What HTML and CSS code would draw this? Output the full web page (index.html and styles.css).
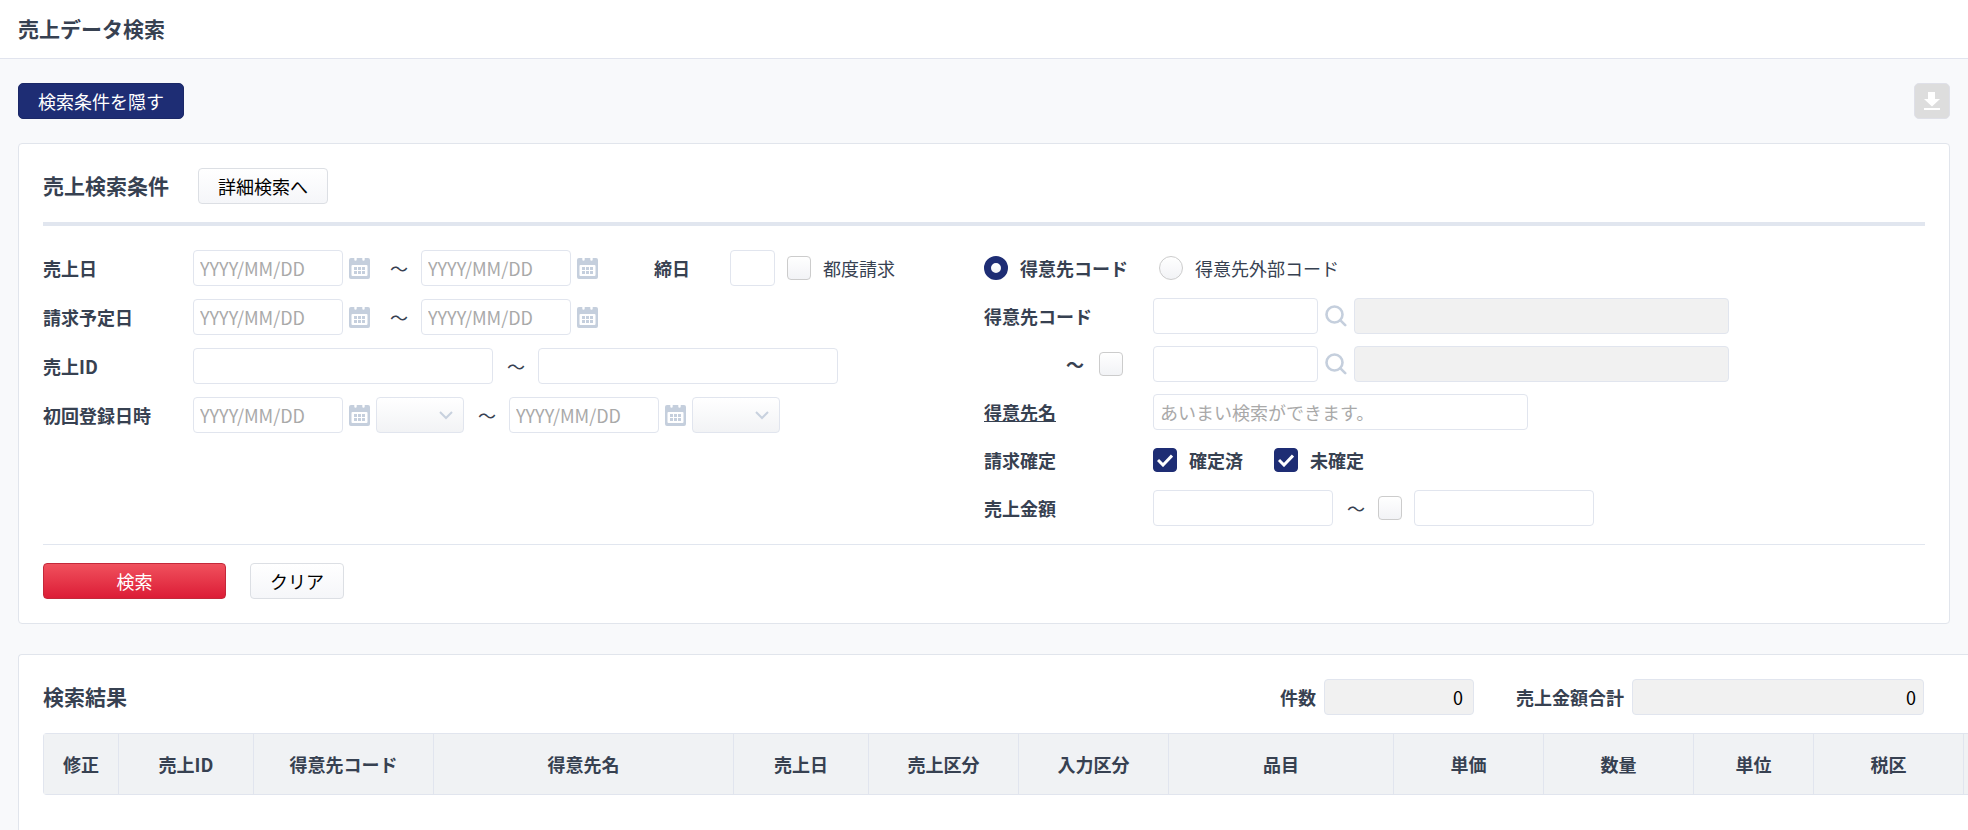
FILE: index.html
```html
<!DOCTYPE html>
<html lang="ja">
<head>
  <meta charset="UTF-8">
  <meta name="viewport" content="width=device-width, initial-scale=1">
  <title>売上データ検索</title>
  <link rel="stylesheet" href="styles.css">
</head>
<body>

<!-- 共通アイコン -->
<svg class="sprite" aria-hidden="true">
  <symbol id="icon-calendar" viewBox="0 0 21 21">
    <path fill-rule="evenodd" d="M2 0H5.300V1.500a1.200 1.200 0 0 0 2.400 0V0H13.300V1.500a1.200 1.200 0 0 0 2.400 0V0H19a2 2 0 0 1 2 2V19a2 2 0 0 1-2 2H2a2 2 0 0 1-2-2V2a2 2 0 0 1 2-2ZM3.500 7a1 1 0 0 0-1 1V17a1 1 0 0 0 1 1H17.500a1 1 0 0 0 1-1V8a1 1 0 0 0-1-1Z"/>
    <path d="M5 9h3v3H5zM9 9h3v3H9zM13 9h3v3h-3zM5 13h3v3H5zM9 13h3v3H9zM13 13h3v3h-3z"/>
  </symbol>
  <symbol id="icon-search" viewBox="0 0 22 22">
    <circle cx="9.5" cy="9.5" r="8" fill="none" stroke="currentColor" stroke-width="2.6"/>
    <path d="M15.2 15.2L20.2 20.2" fill="none" stroke="currentColor" stroke-width="2.6" stroke-linecap="round"/>
  </symbol>
</svg>

<header class="page-header">
  <h1>売上データ検索</h1>
</header>

<main>
  <div class="toolbar">
    <button type="button" class="btn btn-navy">検索条件を隠す</button>
    <button type="button" class="btn-download" aria-label="ダウンロード" disabled>
      <svg viewBox="0 0 16 18" width="16" height="18"><path d="M4 0h7v7h5l-8 7.500L0 7h4zM0 16h16v2H0z"/></svg>
    </button>
  </div>

  <form class="panel">
    <div class="panel-head">
      <h2>売上検索条件</h2>
      <button type="button" class="btn">詳細検索へ</button>
    </div>

    <div class="conditions">
      <div class="col col-left">
        <div class="row">
          <label class="name" for="sales-from">売上日</label>
          <input type="text" class="w-date" id="sales-from" placeholder="YYYY/MM/DD">
          <button type="button" class="icon" aria-label="カレンダー"><svg><use href="#icon-calendar"/></svg></button>
          <span class="tilde">～</span>
          <input type="text" class="w-date" aria-label="売上日 終了" placeholder="YYYY/MM/DD">
          <button type="button" class="icon" aria-label="カレンダー"><svg><use href="#icon-calendar"/></svg></button>
          <label class="name name-close" for="closing-day">締日</label>
          <input type="text" class="w-day" id="closing-day">
          <label class="check check-day"><input type="checkbox">都度請求</label>
        </div>
        <div class="row">
          <label class="name" for="bill-from">請求予定日</label>
          <input type="text" class="w-date" id="bill-from" placeholder="YYYY/MM/DD">
          <button type="button" class="icon" aria-label="カレンダー"><svg><use href="#icon-calendar"/></svg></button>
          <span class="tilde">～</span>
          <input type="text" class="w-date" aria-label="請求予定日 終了" placeholder="YYYY/MM/DD">
          <button type="button" class="icon" aria-label="カレンダー"><svg><use href="#icon-calendar"/></svg></button>
        </div>
        <div class="row">
          <label class="name" for="id-from">売上ID</label>
          <input type="text" class="w-id" id="id-from">
          <span class="tilde">～</span>
          <input type="text" class="w-id" aria-label="売上ID 終了">
        </div>
        <div class="row">
          <label class="name" for="reg-from">初回登録日時</label>
          <input type="text" class="w-date" id="reg-from" placeholder="YYYY/MM/DD">
          <button type="button" class="icon" aria-label="カレンダー"><svg><use href="#icon-calendar"/></svg></button>
          <select aria-label="開始時刻"><option></option></select>
          <span class="tilde">～</span>
          <input type="text" class="w-date" aria-label="初回登録日時 終了" placeholder="YYYY/MM/DD">
          <button type="button" class="icon" aria-label="カレンダー"><svg><use href="#icon-calendar"/></svg></button>
          <select aria-label="終了時刻"><option></option></select>
        </div>
      </div>

      <div class="col col-right">
        <div class="row row-choices">
          <label class="check"><input type="radio" name="code-type" checked>得意先コード</label>
          <label class="check"><input type="radio" name="code-type">得意先外部コード</label>
        </div>
        <div class="row">
          <label class="name" for="code-from">得意先コード</label>
          <input type="text" class="w-code" id="code-from">
          <button type="button" class="icon icon-search" aria-label="得意先を検索"><svg><use href="#icon-search"/></svg></button>
          <input type="text" class="w-name" aria-label="得意先 開始" disabled>
        </div>
        <div class="row">
          <label class="name name-range">～<input type="checkbox"></label>
          <input type="text" class="w-code" aria-label="得意先コード 終了">
          <button type="button" class="icon icon-search" aria-label="得意先を検索"><svg><use href="#icon-search"/></svg></button>
          <input type="text" class="w-name" aria-label="得意先 終了" disabled>
        </div>
        <div class="row">
          <label class="name" for="customer"><u>得意先名</u></label>
          <input type="text" class="w-name" id="customer" placeholder="あいまい検索ができます。">
        </div>
        <div class="row row-choices">
          <span class="name">請求確定</span>
          <label class="check"><input type="checkbox" checked>確定済</label>
          <label class="check"><input type="checkbox" checked>未確定</label>
        </div>
        <div class="row">
          <label class="name" for="amount-from">売上金額</label>
          <input type="text" class="w-amount" id="amount-from">
          <span class="tilde">～</span>
          <label class="check check-range"><input type="checkbox" aria-label="範囲指定"></label>
          <input type="text" class="w-amount" aria-label="売上金額 終了">
        </div>
      </div>
    </div>

    <div class="actions">
      <button type="submit" class="btn btn-red">検索</button>
      <button type="reset" class="btn">クリア</button>
    </div>
  </form>

  <section class="panel panel-result">
    <div class="result-head">
      <h2>検索結果</h2>
      <label class="total" for="count">件数</label>
      <input type="text" class="w-date num num-count" id="count" value="0" disabled>
      <label class="total total-sum" for="sum">売上金額合計</label>
      <input type="text" class="w-sum num" id="sum" value="0" disabled>
    </div>

    <div class="table-wrap">
      <table class="result-table">
        <colgroup>
          <col class="c75"><col class="c135"><col class="c180"><col class="c300"><col class="c135">
          <col class="c150"><col class="c150"><col class="c225"><col class="c150"><col class="c150">
          <col class="c120"><col class="c150"><col class="c150">
        </colgroup>
        <thead>
          <tr>
            <th>修正</th>
            <th>売上ID</th>
            <th>得意先コード</th>
            <th>得意先名</th>
            <th>売上日</th>
            <th>売上区分</th>
            <th>入力区分</th>
            <th>品目</th>
            <th>単価</th>
            <th>数量</th>
            <th>単位</th>
            <th>税区</th>
            <th></th>
          </tr>
        </thead>
      </table>
    </div>
  </section>
</main>

</body>
</html>
```

FILE: styles.css
```css
* { box-sizing: border-box; }

body {
  display: flex;
  flex-direction: column;
  margin: 0;
  min-height: 100vh;
  background: #f8f9fb;
  color: #374151;
  font-family: "Noto Sans CJK JP", sans-serif;
  font-size: 18px;
  line-height: 26px;
}

.sprite { position: absolute; width: 0; height: 0; }

h1, h2 { margin: 0; font-size: 21px; line-height: 30px; font-weight: bold; }
h2 { padding-bottom: 2px; }

.page-header {
  padding: 13px 18px 15px;
  background: #fff;
  border-bottom: 1px solid #e1e4ee;
}

main {
  display: flex;
  flex-direction: column;
  flex: 1;
  padding: 24px 18px 0;
}

.toolbar { display: flex; justify-content: space-between; margin-bottom: 24px; }

/* ボタン */
button { font-family: inherit; cursor: pointer; }

.btn {
  height: 36px;
  padding: 0 19px;
  border: 1px solid #dcdfe4;
  border-radius: 4px;
  background: linear-gradient(#fff, #f5f6f9);
  color: #000;
  font-size: 18px;
  line-height: 26px;
}
.btn-navy { background: #1e2d74; border-color: #1b2867; color: #fff; border-radius: 5px; }
.btn-red {
  width: 183px;
  background: linear-gradient(#f0515d, #dc1c36);
  border-color: #c4283a;
  color: #fff;
}
.btn-download {
  display: flex;
  align-items: center;
  justify-content: center;
  width: 36px;
  height: 36px;
  padding: 0;
  border: 1px solid #dfe0e8;
  border-radius: 5px;
  background: #ddd;
  fill: #fff;
}

/* パネル */
.panel {
  padding: 24px;
  margin-bottom: 30px;
  background: #fff;
  border: 1px solid #e1e5ec;
  border-radius: 4px;
}
.panel-head {
  display: flex;
  align-items: center;
  gap: 29px;
  padding-bottom: 18px;
  margin-bottom: 24px;
  border-bottom: 4px solid #e1e6ef;
}

.conditions { display: grid; grid-template-columns: 1fr 1fr; }
.col { display: flex; flex-direction: column; gap: 12px; }
.col-left { gap: 13px; }
.row { display: flex; align-items: center; height: 36px; }
.name { flex: none; width: 150px; font-weight: bold; }
.col-right .name { width: 169px; }
.name-close { width: 76px; margin-left: 50px; }
.name-range { display: flex; align-items: center; justify-content: flex-end; gap: 15px; padding-right: 30px; }

/* 入力欄 */
input[type="text"], select {
  flex: none;
  height: 36px;
  margin: 0;
  padding: 0 7px 0 6px;
  border: 1px solid #e1e5ee;
  border-radius: 4px;
  background: #fff;
  color: #000;
  font-family: inherit;
  font-size: 18px;
}
input::placeholder { color: #a9a9a9; }
input[type="text"]:disabled { background: #f1f1f1; }

.w-date { width: 150px; }
.w-day { width: 45px; }
.w-id { width: 300px; }
.w-code { width: 165px; }
.w-name { width: 375px; }
.w-amount { width: 180px; }
.w-sum { width: 292px; }

select {
  appearance: none;
  width: 88px;
  background:
    url("data:image/svg+xml,%3Csvg xmlns='http://www.w3.org/2000/svg' width='14' height='9'%3E%3Cpath d='M1 1l6 6 6-6' fill='none' stroke='%23c8d1de' stroke-width='2'/%3E%3C/svg%3E") no-repeat right 10px center,
    linear-gradient(#fff, #f2f3f5);
}

.icon {
  flex: none;
  width: 21px;
  height: 21px;
  margin: 0 6px;
  padding: 0;
  border: 0;
  background: none;
  color: #c5cfdd;
  fill: #c5cfdd;
}
.icon svg { display: block; width: 100%; height: 100%; }
.icon-search { width: 22px; height: 22px; margin: 0 7px; }

.tilde { flex: none; width: 18px; margin: 0 13px 0 14px; }

/* チェックボックス・ラジオ */
input[type="checkbox"], input[type="radio"] {
  appearance: none;
  flex: none;
  width: 24px;
  height: 24px;
  margin: 0;
  border: 1px solid #ccc;
  border-radius: 4px;
  background: linear-gradient(#fff, #f2f3f6);
}
input[type="radio"] { border-radius: 50%; }
input[type="checkbox"]:checked {
  border-color: #1e2d74;
  background: #1e2d74 url("data:image/svg+xml,%3Csvg xmlns='http://www.w3.org/2000/svg' width='16' height='13'%3E%3Cpath d='M1 6l5 5 9-9.500' fill='none' stroke='%23fff' stroke-width='3'/%3E%3C/svg%3E") no-repeat center;
}
input[type="radio"]:checked { border: 7px solid #1e2d74; }

.check { display: flex; align-items: center; gap: 12px; }
.check:has(:checked) { font-weight: bold; }
.check-day { margin-left: 12px; }
.check-range { margin-right: 12px; }
.row-choices .check { margin-right: 31px; }

.actions {
  display: flex;
  gap: 24px;
  margin-top: 18px;
  padding-top: 18px;
  border-top: 1px solid #e1e6ef;
}

/* 検索結果：右端まで広げて表を横スクロールさせる */
.panel-result {
  flex: 1;
  margin: 0 -18px 0 0;
  padding-right: 0;
  border-right: 0;
  border-bottom: 0;
  border-radius: 4px 0 0 0;
}
.result-head {
  display: flex;
  align-items: center;
  margin: 0 44px 18px 0;
}
.result-head h2 { margin-right: auto; }
.total { margin-right: 8px; font-weight: bold; }
.total-sum { margin-left: 42px; }
.num { text-align: right; }
.result-head .num-count { padding-right: 10px; }

.table-wrap { overflow-x: auto; scrollbar-width: none; }
.result-table {
  table-layout: fixed;
  width: 2070px;
  border-collapse: separate;
  border-spacing: 0;
  border: 1px solid #e1e5ee;
  border-right: 0;
  border-radius: 4px;
}
.result-table th {
  height: 60px;
  padding: 0;
  background: #f0f2f4;
  border-right: 1px solid #e1e5ee;
  text-align: center;
}
.c75 { width: 75px; }
.c120 { width: 120px; }
.c135 { width: 135px; }
.c150 { width: 150px; }
.c180 { width: 180px; }
.c225 { width: 225px; }
.c300 { width: 300px; }
```
